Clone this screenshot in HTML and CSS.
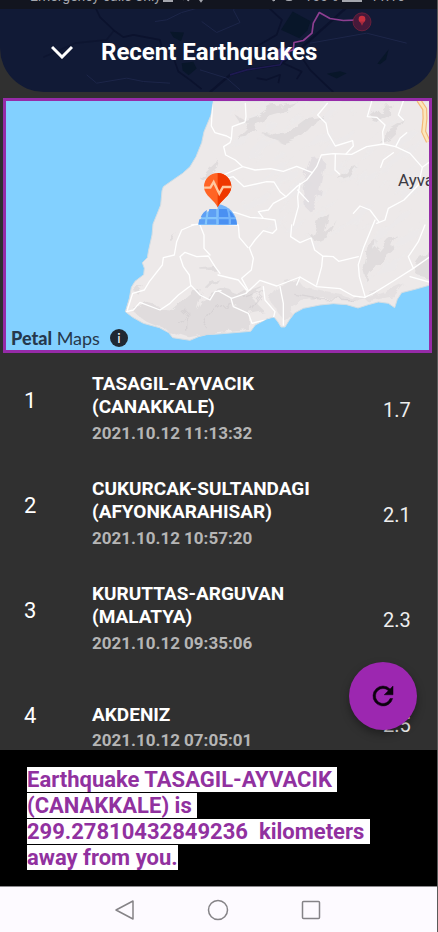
FILE: index.html
```html
<!DOCTYPE html>
<html lang="en">
<head>
<meta charset="utf-8">
<meta name="viewport" content="width=device-width, initial-scale=1">
<title>Recent Earthquakes</title>
<link rel="stylesheet" href="styles.css">
</head>
<body>
<div class="app">
  <header class="header">
    <svg class="header-art" viewBox="0 0 1311 277" preserveAspectRatio="xMidYMid slice" aria-hidden="true">
      <g fill="#081629">
        <path d="M878 35L932 64L922 92L898 115L843 90Z"/>
        <path d="M510 96L552 98L543 124L520 112Z"/>
        <path d="M545 190L580 186L590 206L566 226L548 212Z"/>
        <path d="M1132 192L1166 148L1158 180L1140 193Z"/>
        <path d="M980 222L1020 214L1040 220L1010 236Z"/>
      </g>
      <g fill="none" stroke="#0b122d" stroke-width="5" stroke-linejoin="round">
        <path d="M285 20L300 52L342 92L370 112L400 105L480 120L486 150L520 172L535 215L570 240L605 268"/>
        <path d="M342 92L320 120L225 130L130 172" opacity=".6"/>
        <path d="M780 0L846 60L830 105L770 140L750 200"/>
        <path d="M1065 0L920 130L840 195L740 210L690 225L630 277" stroke-width="7"/>
        <path d="M890 150L930 210L1000 277"/>
        <path d="M770 235L800 240L840 225L835 250M850 190L905 215L890 238"/>
      </g>
      <g fill="none" stroke="#1d2649" stroke-width="3">
        <path d="M465 65L500 60L545 38L610 20M605 65L650 98L720 68L700 30L735 0"/>
        <path d="M260 225L290 250L380 235L430 245L510 250M600 210L680 235L720 270M930 130L1100 100L1220 130"/>
      </g>
      <path d="M690 225L740 210L840 195L870 140" fill="none" stroke="#1e1a52" stroke-width="5"/>
      <path d="M848 162L880 150L882 128L910 122L936 100L940 70L958 38L990 56L1030 62L1086 60" fill="none" stroke="#8d3f91" stroke-width="5" stroke-linejoin="round"/>
      <circle cx="850" cy="162" r="20" fill="#4b42a6" opacity=".6"/>
      <circle cx="1086" cy="66" r="27" fill="#46193a" stroke="#85233d" stroke-width="2"/>
      <circle cx="1086" cy="58" r="10" fill="#c7303f"/><path d="M1080 65L1092 65L1086 78Z" fill="#a72b3d"/>
    </svg>
    <div class="status">
      <span class="carrier">Emergency calls only</span>
      <svg class="status-left" viewBox="0 0 44 12" aria-hidden="true"><path d="M1 0H9V9H1Z" fill="none" stroke="currentColor" stroke-width="2"/><path d="M20 8L22 3M25 9L27 3M35 5L38 9L41 5" fill="none" stroke="currentColor" stroke-width="2"/></svg>
      <svg class="status-right" viewBox="0 0 26 12" aria-hidden="true"><path d="M4 0V9M1 5L4 9" fill="none" stroke="currentColor" stroke-width="2"/><rect x="15" y="1" width="8" height="8" rx="3" fill="currentColor"/></svg>
      <span>100%</span>
      <svg class="battery" viewBox="0 0 20 12" aria-hidden="true"><rect x="1" y="0" width="18" height="9" fill="none" stroke="currentColor" stroke-width="2"/></svg>
      <span>11:16</span>
    </div>
    <div class="title-bar">
      <button class="icon-button" type="button" aria-label="Collapse">
        <svg viewBox="0 0 22 14" aria-hidden="true"><path d="M1 2L11 12L21 2" fill="none" stroke="currentColor" stroke-width="3"/></svg>
      </button>
      <h1>Recent Earthquakes</h1>
    </div>
  </header>

  <section class="map" aria-label="Map">
    <svg class="map-art" viewBox="18 303 1269 747" preserveAspectRatio="xMidYMid slice" aria-hidden="true">
      <defs>
        <clipPath id="land"><path id="coast" d="M640 303L633 345L612 395L605 428L588 470L570 500L548 520L520 539L490 560L486 572L482 615L472 640L459 672L456 705L446 750L442 773L427 788L433 805L431 824L405 844L394 862L388 895L376 935L398 952L430 970L478 983L506 998L518 1013L570 1021L596 1010L620 1004L654 1002L752 994L766 975L800 957L822 951L834 966L843 981L855 981L868 960L884 939L910 925L960 915L1000 911L1040 914L1074 924L1105 914L1135 906L1165 910L1184 923L1192 898L1205 878L1245 868L1290 855V303Z"/></clipPath>
        <clipPath id="hills"><path d="M690 303H1290V830L1200 850L1090 880L1080 700L1060 680L1020 760L930 740L900 700L780 700L690 560Z"/></clipPath>
        <filter id="relief" x="-5%" y="-5%" width="110%" height="110%"><feTurbulence type="fractalNoise" baseFrequency=".03" numOctaves="2" seed="4"/><feDisplacementMap in="SourceGraphic" scale="34"/></filter>
        <filter id="ridges" x="0" y="0" width="100%" height="100%"><feTurbulence type="fractalNoise" baseFrequency=".012 .035" numOctaves="3" seed="11"/><feColorMatrix values="0 0 0 0 .84  0 0 0 0 .825  0 0 0 0 .83  14 0 0 0 -8"/></filter>
      </defs>
      <rect x="-600" y="0" width="2600" height="1400" fill="#82d0ff"/>
      <use href="#coast" fill="#ede9e9" stroke="#d4dde3" stroke-width="3"/>
      <g clip-path="url(#land)">
        <g clip-path="url(#hills)" opacity=".6"><rect x="200" y="-100" width="1500" height="1500" transform="rotate(-40 950 650)" filter="url(#ridges)"/></g>
        <g fill="#dcd9da" opacity=".8" filter="url(#relief)">
          <path d="M600 535L645 490L660 485L654 505L612 545Z"/>
          <path d="M700 340L735 360L770 348L810 320L850 315L895 305L860 335L800 352L755 375L720 370Z"/>
          <path d="M710 415L745 380L770 365L765 385L740 410ZM780 395L825 405L870 392L920 355L970 345L925 395L895 415L850 430L815 415Z"/>
          <path d="M1110 355L1145 325L1185 320L1160 345L1130 365Z"/>
          <path d="M1140 430L1165 390L1190 375L1215 360L1200 385L1170 415Z"/>
          <path d="M905 560L935 475L965 470L975 500L960 580L935 640L915 620Z" fill="#dfdbdf"/>
          <path d="M1015 540L1045 505L1070 498L1045 530Z"/>
          <path d="M935 710L960 650L985 640L970 700L1000 675L1010 660L985 715L950 730Z"/>
          <path d="M1090 810L1105 745L1130 720L1125 755L1160 715L1185 700L1170 735L1185 740L1130 790L1100 845Z"/>
          <path d="M1240 800L1260 770L1290 755V835L1250 825Z"/>
          <path d="M395 930L440 905L475 925L520 930L570 885L605 870L590 930L620 880L670 860L720 890L700 920L750 915L750 990L650 1000L570 1015L510 995L440 965Z"/>
          <path d="M690 900L740 870L780 855L760 900L790 930L740 940Z"/>
          <path d="M810 900L850 850L890 835L910 860L1010 880L1080 895L1165 870L1210 850L1180 885L1080 905L970 890L895 905L850 960Z" opacity=".65"/>
          <path d="M600 805L650 800L650 812L605 812ZM500 720L530 700L520 718ZM610 860L625 845L655 835L635 860ZM395 870L430 855L410 875Z"/>
        </g>
        <g fill="none" stroke="#c8c4c7" stroke-width="4" opacity=".4" filter="url(#relief)">
          <path d="M535 970L560 935L560 995M615 980L645 930L690 900M735 895L790 875L750 930M880 880L960 895L1060 900"/>
        </g>
        <g fill="none" stroke="#fff" stroke-width="4" stroke-linejoin="round" stroke-linecap="round">
          <path d="M638 303L636 340L634 378L645 398L680 408L694 416L690 428L671 440L677 465L706 480L728 500L765 510L812 506L850 514L890 499L937 518L950 500L964 465L1000 461L1055 463L1100 440L1150 432L1187 440L1230 460L1267 502L1290 485"/>
          <path d="M736 310L738 350L735 366L697 380L694 416M728 500L670 525L635 555L660 540L700 530L732 560L800 545L822 546L840 575L858 590L890 560L920 540L937 518"/>
          <path d="M982 310L953 345L978 370L984 400L1006 438L1058 422L1060 438L1038 462M1115 305L1102 350L1130 352L1155 375L1148 395L1150 432M1210 303L1195 345L1210 360M1006 463L1005 510L1018 522M1187 440L1200 415L1220 398M1180 458L1150 480L1142 502"/>
          <path d="M900 550L893 590L895 620L880 675M893 570L925 605M858 590L820 610L805 630L775 635L790 655L825 660L830 688L818 700L790 692L765 720L753 737L748 743L760 775L754 810L725 835L744 870L738 880"/>
          <path d="M1060 640L1080 618L1110 630L1136 665M1125 660L1090 745L1075 794L1078 830L1096 892M1267 502L1255 555L1212 600L1165 625L1155 660L1130 670"/>
          <path d="M1275 675L1255 725L1225 770L1240 805L1185 840L1120 880L1094 892L1060 888L1020 866L950 860L900 831L830 858L780 841L738 880L695 895L655 873M1240 805L1290 770M1230 830L1290 847"/>
          <path d="M654 825L715 840L740 870M693 895L700 920L745 940L756 970L775 965L820 955L830 978M790 860L795 900L825 935L820 955M840 860L850 910L850 975"/>
          <path d="M875 675L872 710L900 728L933 714L944 750L968 768L965 800L950 855M968 768L1000 770L1016 784L1075 770M900 831L890 855"/>
          <path d="M580 675L545 690L530 725L523 765L490 773L487 795L448 845L433 870L398 880L382 930M540 770L555 757L590 770L625 768L645 800L660 820M600 675L612 705L612 745L630 765M540 770L550 800L568 825L572 855L600 885L630 900L645 875L663 872M572 857L535 885L510 910L480 930L420 907L400 930L380 935"/>
          <path d="M654 635L705 637L750 652L790 655M715 675L718 712L744 743M575 675L620 670M654 672L715 675"/>
        </g>
        <path d="M1256 300L1274 327L1275 355L1271 395L1285 425" fill="none" stroke="#f4b878" stroke-width="15"/>
        <path d="M1256 300L1274 327L1275 355L1271 395L1285 425" fill="none" stroke="#fbe6bb" stroke-width="8"/>
      </g>
      <g>
        <path d="M595 675A59 59 0 0 1 711 675Z" fill="#83c5fb"/>
        <path d="M653 613A61 62 0 0 1 711 675H653Z" fill="#74b4fa"/>
        <g fill="#5d9ff4">
          <path d="M602 652Q609 636 621 630L617 652ZM628 627L649 627V651H624Q625 636 628 627ZM598 658H616L614 673H595ZM622 658H649V673H621Z"/>
          <path d="M657 627H680Q685 640 685 651H657ZM688 632Q699 638 704 652H692ZM657 658H686V673H657ZM693 658H708L711 673H693Z" fill="#4a90f2"/>
        </g>
        <path d="M653 622C646 601 612 587 612 560A41 41 0 0 1 694 560C694 587 660 601 653 622Z" fill="#ff6425"/>
        <path d="M653 519A41 41 0 0 1 694 560C694 587 660 601 653 622Z" fill="#ef3800"/>
        <path d="M612 563H631L641 546L658 581L669 561H694" fill="none" stroke="#ffc9a0" stroke-width="7"/>
      </g>
    </svg>
    <span class="place">Ayvacık</span>
    <div class="attribution">
      <span><b>Petal</b> Maps</span>
      <button class="info" type="button" aria-label="Map information">i</button>
    </div>
  </section>

  <main class="content">
    <ol class="quakes">
      <li class="quake">
        <span class="rank">1</span>
        <div class="details"><h2>TASAGIL-AYVACIK<br>(CANAKKALE)</h2><time datetime="2021-10-12T11:13:32">2021.10.12 11:13:32</time></div>
        <span class="magnitude">1.7</span>
      </li>
      <li class="quake">
        <span class="rank">2</span>
        <div class="details"><h2>CUKURCAK-SULTANDAGI<br>(AFYONKARAHISAR)</h2><time datetime="2021-10-12T10:57:20">2021.10.12 10:57:20</time></div>
        <span class="magnitude">2.1</span>
      </li>
      <li class="quake">
        <span class="rank">3</span>
        <div class="details"><h2>KURUTTAS-ARGUVAN<br>(MALATYA)</h2><time datetime="2021-10-12T09:35:06">2021.10.12 09:35:06</time></div>
        <span class="magnitude">2.3</span>
      </li>
      <li class="quake quake-short">
        <span class="rank">4</span>
        <div class="details"><h2>AKDENIZ</h2><time datetime="2021-10-12T07:05:01">2021.10.12 07:05:01</time></div>
        <span class="magnitude">2.5</span>
      </li>
    </ol>
    <button class="refresh" type="button" aria-label="Refresh">
      <svg viewBox="0 0 24 24" aria-hidden="true"><path fill="currentColor" stroke="currentColor" stroke-width=".4" d="M17.65 6.35A7.96 7.96 0 0 0 12 4a8 8 0 1 0 7.73 10h-2.08A6 6 0 1 1 12 6c1.66 0 3.14.69 4.22 1.78L13 11h7V4z"/></svg>
    </button>
  </main>

  <section class="notice" role="status">
    <p><span>Earthquake TASAGIL-AYVACIK 
(CANAKKALE) is 
299.27810432849236  kilometers 
away from you.</span></p>
  </section>

  <nav class="system-nav" aria-label="System">
    <button type="button" aria-label="Back"><svg viewBox="0 0 24 24" aria-hidden="true"><path d="M20 3V21L3 12Z"/></svg></button>
    <button type="button" aria-label="Home"><svg viewBox="0 0 24 24" aria-hidden="true"><circle cx="12" cy="12" r="9.5"/></svg></button>
    <button type="button" aria-label="Recent apps"><svg viewBox="0 0 24 24" aria-hidden="true"><rect x="3.5" y="3.5" width="17" height="17" rx="1"/></svg></button>
  </nav>
</div>
</body>
</html>
```
FILE: styles.css
```css
* {
  box-sizing: border-box;
}

body {
  margin: 0;
  background: #303030;
  color: #fff;
  font-family: Roboto, "Liberation Sans", sans-serif;
}

h1,
h2,
p,
ol {
  margin: 0;
  padding: 0;
}

button {
  margin: 0;
  padding: 0;
  border: 0;
  background: none;
  color: inherit;
  font: inherit;
}

svg {
  display: block;
}

.app {
  display: flex;
  flex-direction: column;
  height: 100vh;
  border-right: 1px solid #5a5a5a;
}

.header {
  position: relative;
  flex: none;
  overflow: hidden;
  border-radius: 0 0 44px 44px;
  background: #111a36;
}

.header-art {
  position: absolute;
  inset: 0;
  width: 100%;
  height: 100%;
}

.status {
  position: relative;
  display: flex;
  align-items: flex-end;
  height: 9px;
  padding: 0 32px 5px 30px;
  overflow: hidden;
  background: #12151f;
  color: #a4a6ad;
  font-size: 14px;
  line-height: 16px;
}

.status svg {
  flex: none;
  height: 12px;
}

.status-left {
  width: 44px;
  margin-left: 2px;
}

.status-right {
  width: 26px;
  margin: 0 8px 0 auto;
}

.battery {
  width: 20px;
  margin: 0 8px 0 4px;
}

.title-bar {
  position: relative;
  display: flex;
  align-items: center;
  gap: 28px;
  height: 83px;
  padding: 3px 24px 0 51px;
}

.icon-button svg {
  width: 22px;
  height: 14px;
}

h1 {
  font-size: 24px;
  font-weight: 700;
  line-height: 28px;
}

.map {
  position: relative;
  flex: none;
  height: 255px;
  margin: 6px 5px 0 3px;
  overflow: hidden;
  border: 3px solid #962ba8;
}

.map-art {
  width: 100%;
  height: 100%;
}

.place {
  position: absolute;
  top: 69px;
  left: calc(100% - 31px);
  color: #3c3a42;
  font-size: 17px;
  line-height: 20px;
  white-space: nowrap;
}

.attribution {
  position: absolute;
  bottom: 2px;
  left: 5px;
  display: flex;
  align-items: center;
  gap: 10px;
  color: #26384c;
  font-family: Lato, sans-serif;
  font-size: 18px;
  line-height: 20px;
}

.attribution b {
  font-weight: 900;
}

.info {
  width: 18px;
  height: 18px;
  border-radius: 50%;
  background: #202833;
  color: #fff;
  font-size: 14px;
  line-height: 18px;
  text-align: center;
}

.content {
  position: relative;
  flex: 1;
  min-height: 0;
  overflow: hidden;
}

.quakes {
  list-style: none;
}

.quake {
  display: grid;
  grid-template-columns: 68px 1fr 26px;
  height: 105px;
  padding: 19px 28px 0 24px;
}

.rank {
  padding-top: 16px;
  font-size: 22px;
  line-height: 26px;
}

h2 {
  font-size: 19px;
  font-weight: 700;
  line-height: 23px;
}

time {
  display: block;
  margin-top: 4px;
  color: #b5b5b5;
  font-size: 17px;
  font-weight: 700;
  line-height: 22px;
}

.magnitude {
  padding-top: 26px;
  color: #eee;
  font-size: 20px;
  line-height: 24px;
}

.quake-short .details {
  padding-top: 16px;
}

.quake-short time {
  margin-top: 3px;
}

.refresh {
  position: absolute;
  right: 20px;
  bottom: 20px;
  display: grid;
  place-items: center;
  width: 68px;
  height: 68px;
  border-radius: 50%;
  background: #9c27b0;
  box-shadow: 0 4px 8px rgb(0 0 0 / 35%);
  color: #0b020d;
}

.refresh svg {
  width: 30px;
  height: 30px;
}

.notice {
  flex: none;
  padding: 17px 27px 15px;
  background: #000;
}

.notice p {
  color: #91319f;
  font-size: 22px;
  font-weight: 700;
  line-height: 26px;
  white-space: pre;
}

.notice span {
  background: #fff;
}

.system-nav {
  display: flex;
  flex: none;
  align-items: center;
  justify-content: center;
  gap: 69px;
  height: 46px;
  padding-right: 2px;
  border-top: 1px solid #8a888c;
  background: #fdfaff;
  color: #858387;
}

.system-nav svg {
  width: 24px;
  height: 24px;
  fill: none;
  stroke: currentColor;
  stroke-width: 1.5;
  stroke-linejoin: round;
}
```
